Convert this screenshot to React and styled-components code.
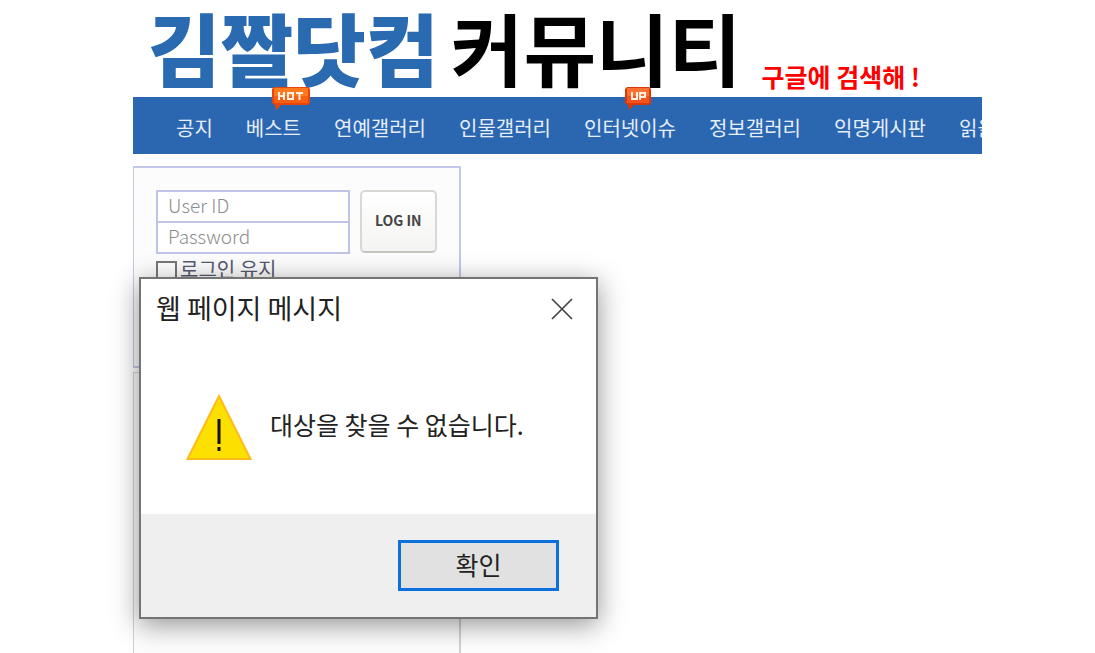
import React from "react";
import styled, { createGlobalStyle } from "styled-components";

const GlobalStyle = createGlobalStyle`
  *, *::before, *::after { box-sizing: border-box; }
  body {
    margin: 0;
    background: #fff;
    font-family: "Noto Sans CJK KR", sans-serif;
  }
  button, input { font-family: inherit; }
`;

const Page = styled.div`
  min-height: 100vh;
  display: flex;
  flex-direction: column;
  padding: 0 113px 0 133px;
`;

const Header = styled.header`
  display: flex;
  align-items: flex-end;
  gap: 20px;
  height: 97px;
  padding: 0 0 3px 15px;
  white-space: nowrap;
`;

const SiteTitle = styled.h1`
  display: flex;
  gap: 12px;
  margin: 0;
  font-size: 79px;
  line-height: 94px;
  font-weight: 700;
  color: #000;
`;

const Brand = styled.span`
  font-weight: 900;
  color: #2a6ab1;
`;

const Slogan = styled.p`
  margin: 0;
  font-size: 25px;
  line-height: 36px;
  font-weight: 700;
  color: #f00;
`;

const Nav = styled.nav`
  height: 57px;
  padding-left: 43px;
  background: #2b67b0;
  overflow-x: clip;
  overflow-y: visible;
`;

const NavList = styled.ul`
  display: flex;
  gap: 33px;
  margin: 0;
  padding: 0;
  list-style: none;
`;

const NavItem = styled.li`
  position: relative;
  flex: none;
`;

const NavLink = styled.a`
  display: block;
  font-size: 20px;
  line-height: 62px;
  color: #e6eefa;
  text-decoration: none;
`;

const Badge = styled.span`
  position: absolute;
  top: -10px;
  left: ${(p) => p.$left}px;
  display: block;
  height: 23px;
`;

const Main = styled.main`
  position: relative;
  flex: 1;
  display: flex;
  flex-direction: column;
  gap: 4px;
  padding-top: 12px;
`;

const LoginPanel = styled.form`
  width: 328px;
  height: 202px;
  padding: 22px 22px;
  border: 2px solid #c3c8e8;
  border-left-width: 1px;
  background: #fcfcfc;
`;

const LoginRow = styled.div`
  display: flex;
  gap: 10px;
`;

const Fields = styled.div`
  display: flex;
  flex-direction: column;
  width: 195px;
`;

const Field = styled.input`
  width: 100%;
  height: 33px;
  padding: 0 10px 4px;
  border: 2px solid #c0c5e8;
  background: #fff;
  font-size: 19px;
  color: #555;
  outline: none;

  & + & {
    height: 31px;
    border-top: 0;
  }

  &::placeholder {
    color: #8c8c8c;
    font-weight: 300;
    opacity: 1;
  }
`;

const LoginButton = styled.button`
  width: 78px;
  height: 63px;
  padding: 0 0 4px;
  border: 2px solid #d8d8d4;
  border-bottom-color: #c6c6c0;
  border-radius: 5px;
  background: linear-gradient(#fff, #f4f4f2);
  font-size: 14px;
  font-weight: 700;
  color: #444;
`;

const KeepLogin = styled.label`
  display: flex;
  align-items: center;
  gap: 3px;
  height: 34px;
  font-size: 20px;
  line-height: 28px;
  color: #555a70;
`;

const KeepLabel = styled.span`
  padding-bottom: 4px;
`;

const Checkbox = styled.input`
  appearance: none;
  width: 21px;
  height: 21px;
  margin: 0;
  border: 2px solid #777;
  background: #fff;
`;

const SidePanel = styled.aside`
  flex: 1;
  width: 328px;
  border: 1px solid #d2d2d6;
  border-right-width: 2px;
  border-bottom: 0;
  background: #fdfdfd;
`;

const Dialog = styled.section`
  position: absolute;
  top: 123px;
  left: 6px;
  width: 459px;
  border: 2px solid #747474;
  background: #fff;
  box-shadow: 0 6px 26px rgba(0, 0, 0, 0.42);
`;

const DialogHeader = styled.header`
  display: flex;
  align-items: center;
  justify-content: space-between;
  height: 60px;
  padding: 0 23px 0 15px;
`;

const DialogTitle = styled.h2`
  margin: 0;
  padding-bottom: 2px;
  font-size: 27px;
  line-height: 40px;
  font-weight: 400;
  color: #222;
`;

const CloseButton = styled.button`
  display: flex;
  padding: 0;
  border: 0;
  background: none;
`;

const DialogBody = styled.div`
  display: flex;
  align-items: center;
  gap: 18px;
  height: 175px;
  padding-left: 45px;
`;

const Message = styled.p`
  margin: 0;
  padding-bottom: 6px;
  font-size: 25px;
  line-height: 36px;
  color: #222;
`;

const DialogFooter = styled.footer`
  display: flex;
  align-items: center;
  justify-content: flex-end;
  height: 103px;
  padding: 0 37px;
  background: #efefef;
`;

const ConfirmButton = styled.button`
  width: 161px;
  height: 51px;
  padding: 0 0 4px;
  border: 3px solid #0b6fdc;
  background: #e1e1e1;
  font-size: 25px;
  color: #222;
`;

const HotIcon = () => (
  <svg width="38" height="23" viewBox="0 0 38 23" role="img" aria-label="HOT">
    <path d="M2 0H36L38 2V16L36 18H9L4 23L3 18L0 16V2Z" fill="#e8440c" />
    <path d="M2 1H36V15H2Z" fill="#ff7a1c" />
    <path d="M2 9H36V16H2Z" fill="#fb5f12" />
    <path
      d="M7 5V13M12 5V13M7 9H12M16 6H21V12H16ZM24 6H31M27.500 6V13"
      fill="none" stroke="#fff0e4" strokeWidth="2"
    />
  </svg>
);

const UpIcon = () => (
  <svg width="26" height="23" viewBox="0 0 26 23" role="img" aria-label="UP">
    <path d="M2 0H24L26 2V16L24 18H9L4 23L3 18L0 16V2Z" fill="#d93a0c" />
    <path d="M2 1H24V15H2Z" fill="#ff7030" />
    <path d="M2 9H24V16H2Z" fill="#f8521a" />
    <path
      d="M7 5V12H12V5M15 13V6H20V10H15"
      fill="none" stroke="#fff0e4" strokeWidth="2"
    />
  </svg>
);

const CloseIcon = () => (
  <svg width="22" height="22" viewBox="0 0 22 22" aria-hidden="true">
    <path d="M1 1L21 21M21 1L1 21" stroke="#444" strokeWidth="1.700" />
  </svg>
);

const WarningIcon = () => (
  <svg width="66" height="66" viewBox="0 0 66 66" aria-hidden="true">
    <path d="M33 2L64.500 65H1.500Z" fill="#fde000" stroke="#ffb91c" strokeWidth="2" />
    <path d="M33 25V50M33 53V57" stroke="#111" strokeWidth="3" />
  </svg>
);

const NAV_ITEMS = [
  { label: "공지" },
  { label: "베스트", icon: <HotIcon />, left: 26 },
  { label: "연예갤러리" },
  { label: "인물갤러리" },
  { label: "인터넷이슈", icon: <UpIcon />, left: 41 },
  { label: "정보갤러리" },
  { label: "익명게시판" },
  { label: "읽을거리" },
];

export default function App() {
  return (
    <>
      <GlobalStyle />
      <Page>
        <Header>
          <SiteTitle>
            <Brand>김짤닷컴</Brand>
            <span>커뮤니티</span>
          </SiteTitle>
          <Slogan>구글에 검색해 !</Slogan>
        </Header>
        <Nav>
          <NavList>
            {NAV_ITEMS.map((item) => (
              <NavItem key={item.label}>
                <NavLink href="#">{item.label}</NavLink>
                {item.icon && <Badge $left={item.left}>{item.icon}</Badge>}
              </NavItem>
            ))}
          </NavList>
        </Nav>
        <Main>
          <LoginPanel onSubmit={(e) => e.preventDefault()}>
            <LoginRow>
              <Fields>
                <Field type="text" placeholder="User ID" aria-label="User ID" />
                <Field type="password" placeholder="Password" aria-label="Password" />
              </Fields>
              <LoginButton type="submit">LOG IN</LoginButton>
            </LoginRow>
            <KeepLogin>
              <Checkbox type="checkbox" />
              <KeepLabel>로그인 유지</KeepLabel>
            </KeepLogin>
          </LoginPanel>
          <SidePanel />
          <Dialog role="alertdialog" aria-labelledby="dialog-title" aria-describedby="dialog-message">
            <DialogHeader>
              <DialogTitle id="dialog-title">웹 페이지 메시지</DialogTitle>
              <CloseButton type="button" aria-label="닫기">
                <CloseIcon />
              </CloseButton>
            </DialogHeader>
            <DialogBody>
              <WarningIcon />
              <Message id="dialog-message">대상을 찾을 수 없습니다.</Message>
            </DialogBody>
            <DialogFooter>
              <ConfirmButton type="button">확인</ConfirmButton>
            </DialogFooter>
          </Dialog>
        </Main>
      </Page>
    </>
  );
}
